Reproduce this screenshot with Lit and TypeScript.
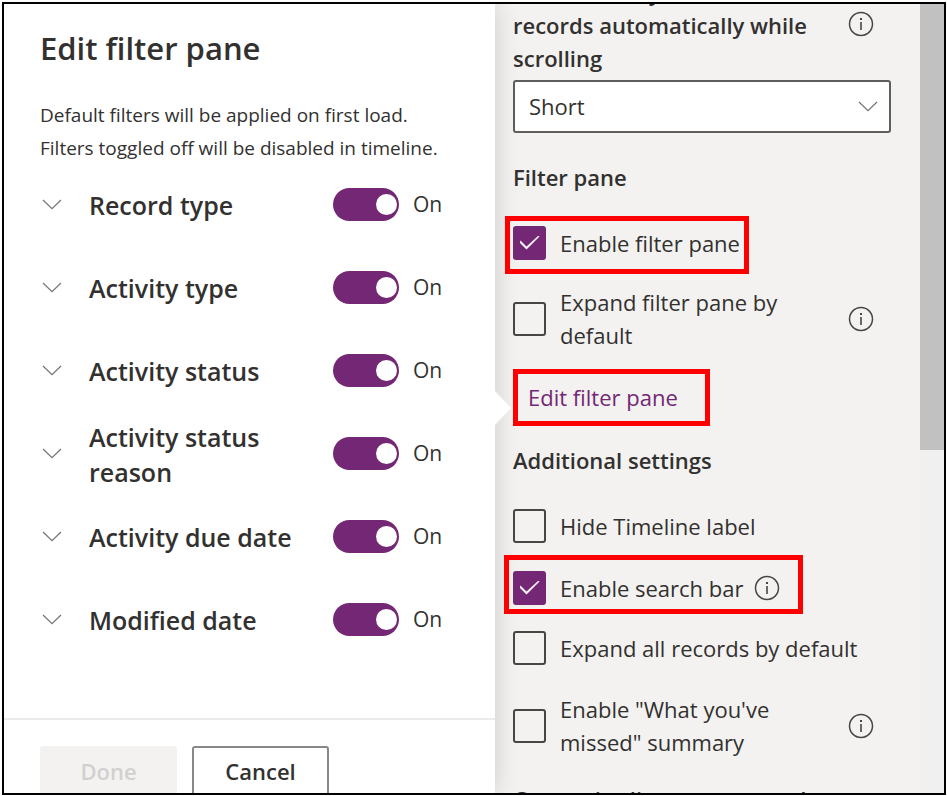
import { LitElement, html, css, nothing } from "lit";
import { customElement, property } from "lit/decorators.js";

const chevron = html`<svg class="chevron" viewBox="0 0 20 11" width="20" height="11" aria-hidden="true">
  <path d="M1 1 L10 9.7 L19 1" fill="none" stroke="currentColor" stroke-width="1.3" />
</svg>`;

const info = html`<svg class="info" viewBox="0 0 26 26" width="26" height="26" role="img" aria-label="Information">
  <circle cx="13" cy="13" r="11.5" fill="none" stroke="currentColor" stroke-width="1.5" />
  <rect x="12.2" y="11" width="1.6" height="8" fill="currentColor" />
  <rect x="12" y="7" width="2" height="2" fill="currentColor" />
</svg>`;

const base = css`
  * {
    box-sizing: border-box;
  }
  h1,
  h2,
  p,
  ul {
    margin: 0;
    padding: 0;
  }
  button,
  select {
    font: inherit;
    color: inherit;
  }
  svg {
    display: block;
    flex: none;
  }
  .info {
    color: #484644;
  }
`;

@customElement("filter-row")
export class FilterRow extends LitElement {
  @property() label = "";

  static styles = [
    base,
    css`
      :host {
        display: grid;
        grid-template-columns: 49px 244px auto;
        align-items: center;
        height: 83px;
      }
      .expand {
        display: flex;
        width: 24px;
        padding: 0 0 0 2px;
        border: 0;
        background: none;
        color: #797775;
      }
      .name {
        max-width: 210px;
        padding-top: 2px;
        font-size: 25px;
        line-height: 35px;
        font-weight: 600;
      }
      .toggle {
        display: flex;
        align-items: center;
        gap: 14px;
        font-size: 21px;
        line-height: 33px;
      }
      .switch {
        appearance: none;
        display: flex;
        align-items: center;
        justify-content: flex-end;
        width: 66px;
        height: 33px;
        margin: 0;
        padding: 0 2px;
        border-radius: 17px;
        background: #742774;
      }
      .switch::after {
        content: "";
        width: 21px;
        height: 21px;
        border-radius: 50%;
        background: #fff;
      }
      .switch:not(:checked) {
        justify-content: flex-start;
        background: #8a8886;
      }
    `,
  ];

  render() {
    return html`
      <button class="expand" aria-label="Expand ${this.label}">${chevron}</button>
      <span class="name">${this.label}</span>
      <label class="toggle">
        <input class="switch" type="checkbox" role="switch" aria-label=${this.label} checked />
        <span>On</span>
      </label>
    `;
  }
}

@customElement("option-row")
export class OptionRow extends LitElement {
  @property() label = "";
  @property({ type: Boolean }) checked = false;
  @property() hint: "" | "end" | "inline" = "";

  static styles = [
    base,
    css`
      :host {
        display: flex;
        align-items: center;
        justify-content: space-between;
      }
      :host([hint="inline"]) {
        justify-content: flex-start;
        gap: 10px;
      }
      .option {
        display: flex;
        align-items: center;
        gap: 14px;
        font-size: 22px;
        line-height: 33px;
      }
      :host([hint="end"]) .text {
        max-width: 250px;
      }
      .box {
        appearance: none;
        flex: none;
        display: grid;
        place-items: center;
        width: 33px;
        height: 34px;
        margin: 0;
        border: 2px solid #484644;
        border-radius: 3px;
      }
      .box:checked {
        border-color: #742774;
        background: #742774;
      }
      .box:checked::after {
        content: "";
        width: 20px;
        height: 15px;
        background: #f3f2f1;
        clip-path: polygon(0 7px, 1px 5px, 7px 11px, 19px 0, 20px 1px, 7px 14px);
      }
    `,
  ];

  render() {
    return html`
      <label class="option">
        <input class="box" type="checkbox" ?checked=${this.checked} />
        <span class="text">${this.label}</span>
      </label>
      ${this.hint ? info : nothing}
    `;
  }
}

@customElement("app-root")
export class AppRoot extends LitElement {
  static styles = [
    base,
    css`
      :host {
        display: block;
        height: 100vh;
        box-sizing: border-box;
        padding: 2px 1px 1px 2px;
        background: #fff;
        color: #323130;
        font-family: "Open Sans", "Noto Sans", sans-serif;
      }
      .frame {
        display: grid;
        grid-template-columns: 491fr 449fr;
        height: 100%;
        border: 2px solid #000;
        overflow: hidden;
      }
      .callout {
        position: relative;
        min-width: 0;
        min-height: 0;
        background: #fff;
        box-shadow: 0 0 24px rgba(0, 0, 0, 0.16);
      }
      .callout-body {
        padding: 24px 36px 0;
      }
      .title {
        font-size: 31px;
        line-height: 40px;
        font-weight: 600;
      }
      .intro {
        margin-top: 31px;
        font-size: 19px;
        line-height: 33px;
      }
      .filters {
        margin-top: -2px;
        padding-bottom: 57px;
      }
      .actions {
        display: flex;
        gap: 15px;
        padding: 26px 36px;
        border-top: 2px solid #edebe9;
      }
      .action {
        width: 137px;
        height: 50px;
        border: 2px solid #8a8886;
        border-radius: 3px;
        background: #fff;
        font-size: 22px;
        font-weight: 600;
      }
      .action:disabled {
        border-color: #f3f2f1;
        background: #f3f2f1;
        color: #d2d0ce;
      }
      .settings {
        display: grid;
        grid-template-columns: minmax(0, 1fr) 24px;
        min-height: 0;
        background: #f3f2f1;
      }
      .options {
        padding: 0 29px 0 18px;
        font-size: 22px;
        line-height: 33px;
      }
      .delay {
        display: flex;
        justify-content: space-between;
        margin-top: -28px;
        font-weight: 600;
      }
      .delay .info {
        margin: 35px 17px 0 0;
      }
      .delay-label {
        white-space: nowrap;
      }
      .picker {
        display: grid;
        align-items: center;
        margin-top: 5px;
      }
      .picker > * {
        grid-area: 1 / 1;
      }
      .picker .chevron {
        justify-self: end;
        margin-right: 13px;
        color: #797775;
        pointer-events: none;
      }
      .select {
        appearance: none;
        width: 100%;
        height: 53px;
        padding: 0 14px;
        border: 2px solid #605e5c;
        border-radius: 3px;
        background: #fff;
      }
      .heading {
        margin-top: 28px;
        font-size: 22px;
        line-height: 33px;
        font-weight: 600;
      }
      .heading.close {
        margin-top: 18px;
      }
      .heading.next {
        margin-top: 24px;
      }
      option-row {
        padding-right: 17px;
      }
      .marked {
        position: relative;
        width: fit-content;
      }
      .marked option-row {
        padding-right: 0;
      }
      .marked::after {
        content: "";
        position: absolute;
        inset: -10px -9px -14px -8px;
        border: 5px solid #f00;
        pointer-events: none;
      }
      .marked.search::after {
        inset: -16px -23px -9px -9px;
      }
      .link-row {
        position: relative;
        margin-top: 17px;
      }
      .link-row::before {
        content: "";
        position: absolute;
        left: -19px;
        top: 21px;
        width: 17px;
        height: 36px;
        background: #fff;
        clip-path: polygon(0 0, 100% 50%, 0 100%);
      }
      .link {
        position: relative;
        display: block;
        width: 197px;
        padding: 7px 10px;
        border: 5px solid #f00;
        color: #742774;
        text-decoration: none;
        white-space: nowrap;
      }
      .track {
        background: #f0f0f0;
      }
      .thumb {
        height: 446px;
        background: #c1c1c1;
      }
      .gap-s {
        margin-top: 26px;
      }
      .gap-m {
        margin-top: 28px;
      }
      .gap-l {
        margin-top: 32px;
      }
    `,
  ];

  private filters = [
    "Record type",
    "Activity type",
    "Activity status",
    "Activity status reason",
    "Activity due date",
    "Modified date",
  ];

  render() {
    return html`
      <main class="frame">
        <section class="callout">
          <div class="callout-body">
            <h1 class="title">Edit filter pane</h1>
            <p class="intro">
              Default filters will be applied on first load.<br />
              Filters toggled off will be disabled in timeline.
            </p>
            <div class="filters">
              ${this.filters.map((f) => html`<filter-row label=${f}></filter-row>`)}
            </div>
          </div>
          <div class="actions">
            <button class="action" disabled>Done</button>
            <button class="action">Cancel</button>
          </div>
        </section>
        <section class="settings">
          <div class="options">
            <div class="delay">
              <label class="delay-label" for="delay">
                Use this delay to load<br />records automatically while<br />scrolling
              </label>
              ${info}
            </div>
            <div class="picker">
              <select class="select" id="delay">
                <option>Short</option>
              </select>
              ${chevron}
            </div>
            <h2 class="heading">Filter pane</h2>
            <div class="marked gap-l">
              <option-row label="Enable filter pane" checked></option-row>
            </div>
            <option-row class="gap-s" label="Expand filter pane by default" hint="end"></option-row>
            <div class="link-row">
              <a class="link" href="#filters">Edit filter pane</a>
            </div>
            <h2 class="heading close">Additional settings</h2>
            <option-row class="gap-l" label="Hide Timeline label"></option-row>
            <div class="marked search gap-m">
              <option-row label="Enable search bar" checked hint="inline"></option-row>
            </div>
            <option-row class="gap-s" label="Expand all records by default"></option-row>
            <option-row class="gap-m" label="Enable &quot;What you've missed&quot; summary" hint="end"></option-row>
            <h2 class="heading next">Customize lines on a record</h2>
          </div>
          <div class="track"><div class="thumb"></div></div>
        </section>
      </main>
    `;
  }
}
